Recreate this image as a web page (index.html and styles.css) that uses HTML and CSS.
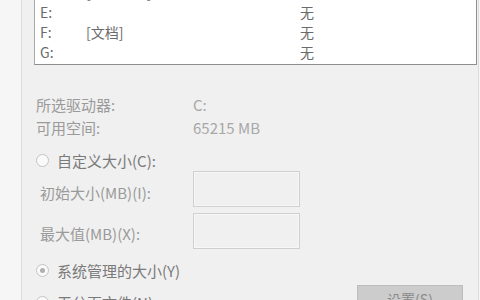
FILE: index.html
```html
<!DOCTYPE html>
<html>
<head>
<meta charset="utf-8">
<link rel="stylesheet" href="styles.css">
</head>
<body>
<div class="frame">
  <div class="list">
    <div class="row"><span class="drv">D:</span><span class="lbl">[本地磁盘]</span><span class="sz">无</span></div>
    <div class="row"><span class="drv">E:</span><span class="lbl"></span><span class="sz">无</span></div>
    <div class="row"><span class="drv">F:</span><span class="lbl">[文档]</span><span class="sz">无</span></div>
    <div class="row"><span class="drv">G:</span><span class="lbl"></span><span class="sz">无</span></div>
  </div>
  <div class="info">
    <span class="k">所选驱动器:</span><span class="v">C:</span>
    <span class="k">可用空间:</span><span class="v">65215 MB</span>
  </div>
  <div class="radio r1"><span class="dot"></span><span class="rl">自定义大小(C):</span></div>
  <div class="field f1"><span class="fl">初始大小(MB)(I):</span><span class="box"></span></div>
  <div class="field f2"><span class="fl">最大值(MB)(X):</span><span class="box"></span></div>
  <div class="radio r2"><span class="dot on"></span><span class="rl">系统管理的大小(Y)</span></div>
  <div class="last">
    <div class="radio r3"><span class="dot"></span><span class="rl">无分页文件(N)</span></div>
    <div class="btn">设置(S)</div>
  </div>
</div>
</body>
</html>
```
FILE: styles.css
```css
html, body {
  margin: 0;
  padding: 0;
  background: #f6f6f6;
  overflow: hidden;
  height: 300px;
}
body {
  font-family: "Noto Sans CJK SC", "Noto Sans", sans-serif;
  font-size: 14px;
}
.frame {
  margin-left: 21px;
  width: 443px;
  height: 300px;
  border-left: 1px solid #dcdcdc;
  border-right: 1px solid #dcdcdc;
  padding-left: 12px;
  padding-right: 1px;
  background: #f0f0f0;
  overflow: hidden;
}
.list {
  margin-top: -19px;
  background: #fff;
  border: 1px solid #8e8e8e;
  border-top-color: #a8a8a8;
  border-left-color: #a8a8a8;
  padding-bottom: 2px;
  color: #6a6a6a;
}
.row {
  display: grid;
  grid-template-columns: 46px 214px 1fr;
  height: 20px;
  line-height: 20px;
  padding-left: 5px;
}
.info {
  display: grid;
  grid-template-columns: 157px 1fr;
  grid-auto-rows: 23px;
  line-height: 23px;
  margin-top: 28px;
  padding-left: 2px;
  font-size: 15px;
  color: #9a9a9a;
}
.info .v { color: #a8a8a8; }
.radio {
  display: flex;
  align-items: center;
  height: 22px;
  padding-left: 2px;
  font-size: 15px;
  color: #7a7a7a;
}
.r1 { margin-top: 10px; }
.dot {
  width: 11px;
  height: 11px;
  border: 1px solid #c4c4c4;
  border-radius: 50%;
  background: #fafafa;
  margin-right: 8px;
  position: relative;
}
.dot.on::after {
  content: "";
  position: absolute;
  left: 3px;
  top: 3px;
  width: 5px;
  height: 5px;
  border-radius: 50%;
  background: #b0b0b0;
}
.field {
  display: grid;
  grid-template-columns: 153px 107px;
  align-items: center;
  padding-left: 6px;
  font-size: 15px;
  color: #9a9a9a;
}
.f1 { height: 36px; }
.f1 .fl { padding-top: 6px; }
.f2 { height: 38px; margin-top: 5px; }
.f2 .fl { padding-top: 5px; }
.box {
  height: 34px;
  border: 1px solid #cfcfcf;
  box-shadow: inset 0 0 0 1px #f7f7f7;
  background: #f0f0f0;
}
.r2 { margin-top: 9px; }
.last {
  display: flex;
  justify-content: space-between;
  align-items: flex-start;
  margin-top: 4px;
  padding-right: 14px;
}
.r3 { margin-top: 6px; }
.btn {
  width: 104px;
  height: 24px;
  border: 1px solid #bdbdbd;
  background: #cccccc;
  color: #8a8a8a;
  font-size: 14px;
  line-height: 26px;
  text-align: center;
}
```
